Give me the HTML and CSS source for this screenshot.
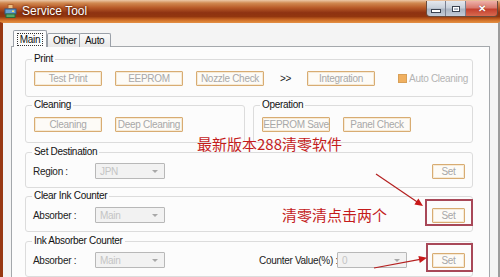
FILE: index.html
```html
<!DOCTYPE html>
<html lang="en">
<head>
    <meta charset="UTF-8">
    <title>Service Tool</title>
    <link rel="stylesheet" href="styles.css">
</head>
<body>
    <div class="window">
        <div class="titlebar">
            <svg class="app-icon" width="13" height="14" viewBox="0 0 13 14">
                <rect x="4" y="0.5" width="5" height="4" fill="#f0c080" stroke="#b06030"/>
                <rect x="1" y="5" width="11" height="5" fill="#6aa0d0" stroke="#2a5a8a"/>
                <rect x="2" y="10" width="9" height="3.5" fill="#58a868" stroke="#2a6a3a"/>
                <rect x="8" y="6.5" width="2" height="1.5" fill="#f8e070"/>
            </svg>
            <span class="title">Service Tool</span>
            <div class="caption-buttons">
                <span class="cap cap-min"><i></i></span>
                <span class="cap cap-max"><i></i></span>
                <span class="cap cap-close">✕</span>
            </div>
        </div>

        <div class="client">
            <div class="tabs">
                <div class="tab active"><span class="focus">Main</span></div>
                <div class="tab">Other</div>
                <div class="tab">Auto</div>
            </div>

            <div class="panel">
                <!-- Print -->
                <fieldset class="group">
                    <legend>Print</legend>
                    <div class="row">
                        <button class="btn">Test Print</button>
                        <button class="btn">EEPROM</button>
                        <button class="btn">Nozzle Check</button>
                        <span class="next">&gt;&gt;</span>
                        <button class="btn">Integration</button>
                        <label class="check"><span class="box"></span>Auto Cleaning</label>
                    </div>
                </fieldset>

                <div class="pair">
                    <fieldset class="group">
                        <legend>Cleaning</legend>
                        <div class="row">
                            <button class="btn">Cleaning</button>
                            <button class="btn">Deep Cleaning</button>
                        </div>
                    </fieldset>
                    <fieldset class="group">
                        <legend>Operation</legend>
                        <div class="row">
                            <button class="btn">EEPROM Save</button>
                            <button class="btn">Panel Check</button>
                        </div>
                    </fieldset>
                </div>

                <!-- Set Destination -->
                <fieldset class="group group-form">
                    <legend>Set Destination</legend>
                    <div class="row">
                        <span class="field-label">Region :</span>
                        <div class="select">JPN</div>
                        <button class="btn btn-set">Set</button>
                    </div>
                </fieldset>

                <!-- Clear Ink Counter -->
                <fieldset class="group group-form group-wide-gap">
                    <legend>Clear Ink Counter</legend>
                    <div class="row">
                        <span class="field-label">Absorber :</span>
                        <div class="select">Main</div>
                        <button class="btn btn-set">Set</button>
                    </div>
                </fieldset>

                <!-- Ink Absorber Counter -->
                <fieldset class="group group-form">
                    <legend>Ink Absorber Counter</legend>
                    <div class="row">
                        <span class="field-label">Absorber :</span>
                        <div class="select">Main</div>
                        <span class="counter-label">Counter Value(%) :</span>
                        <div class="select">0</div>
                        <button class="btn btn-set">Set</button>
                    </div>
                </fieldset>
            </div>
        </div>

        <!-- red annotations drawn over the screenshot -->
        <div class="note note-top">最新版本288清零软件</div>
        <div class="note note-mid">清零清点击两个</div>
        <div class="mark mark-1"></div>
        <div class="mark mark-2"></div>
        <svg class="arrows" width="500" height="277" viewBox="0 0 500 277">
            <line x1="376" y1="174" x2="418" y2="202.5" stroke="#b42020" stroke-width="1.2"/>
            <polygon points="423,206 414.4,204.4 418.4,198.6" fill="#c81818"/>
            <line x1="374" y1="268" x2="420" y2="259.3" stroke="#b42020" stroke-width="1.2"/>
            <polygon points="427,257.8 419.8,262.9 418.4,256.1" fill="#c81818"/>
        </svg>
    </div>
</body>
</html>
```

FILE: styles.css
```css
body {
    margin: 0;
    font-family: "Liberation Sans", Arial, sans-serif;
    font-size: 10px;
    letter-spacing: -0.3px;
    color: #222;
}
.window {
    position: relative;
    width: 500px;
    height: 277px;
    overflow: hidden;
    display: flex;
    flex-direction: column;
}
.titlebar {
    flex: none;
    height: 22px;
    display: flex;
    align-items: center;
    padding-left: 4px;
    background: linear-gradient(to bottom, #ecc8a8 0%, #d08850 14%, #b85a28 35%, #8e3212 58%, #92360f 75%, #cc6a26 90%, #e08838 100%);
}
.app-icon {
    flex: none;
}
.title {
    margin-left: 5px;
    font-size: 12px;
    letter-spacing: 0;
    color: #fff;
    text-shadow: 0 0 2px #5a1a00, 0 0 3px #5a1a00;
}
.caption-buttons {
    margin-left: auto;
    margin-right: 2px;
    align-self: flex-start;
    margin-top: 1px;
    display: flex;
    height: 15px;
    border: 1px solid #6a4a3a;
    border-top: none;
    border-radius: 0 0 4px 4px;
    overflow: hidden;
}
.cap {
    display: flex;
    align-items: center;
    justify-content: center;
    height: 15px;
    background: linear-gradient(to bottom, #e4e8ee 0%, #c8d0da 45%, #aab4c2 55%, #c4ccd8 100%);
    border-right: 1px solid #7a8090;
}
.cap-min {
    width: 18px;
}
.cap-min i {
    width: 8px;
    height: 2px;
    margin-top: 4px;
    background: #fff;
    border: 1px solid #3a4250;
}
.cap-max {
    width: 19px;
}
.cap-max i {
    width: 6px;
    height: 4px;
    border: 1px solid #3a4250;
    box-shadow: inset 0 0 0 1px #fff;
}
.cap-close {
    width: 31px;
    border-right: none;
    background: linear-gradient(to bottom, #eeb0a8 0%, #d87a6e 45%, #c4402e 55%, #d86a50 100%);
    color: #fff;
    font-size: 10px;
    font-weight: bold;
    text-shadow: 0 0 1px #6a1008;
}

.client {
    flex: 1;
    display: flex;
    flex-direction: column;
    background: #f4f4f4;
    border-left: 3px solid #983812;
    border-right: 2px solid #9c9c9c;
    border-top: 1px solid #e08a40;
    padding: 8px 8px 0 8px;
    min-height: 0;
}
.tabs {
    display: flex;
    align-items: flex-end;
    height: 16px;
    padding-left: 2px;
    margin-bottom: -1px;
    position: relative;
}
.tab {
    height: 13px;
    padding: 0 5px;
    display: flex;
    align-items: center;
    border: 1px solid #9aa0a8;
    border-bottom: none;
    border-radius: 2px 2px 0 0;
    background: linear-gradient(to bottom, #fafafa, #e8e8e8);
    color: #111;
    font-size: 10px;
}
.tab + .tab {
    margin-left: -1px;
}
.tab.active {
    height: 16px;
    width: 32px;
    padding: 0;
    justify-content: center;
    background: #fcfcfc;
    margin-right: 1px;
}
.tab:nth-child(2) {
    width: 21px;
}
.tab:nth-child(3) {
    width: 20px;
}
.focus {
    padding: 0 2px;
    outline: 1px dotted #333;
    outline-offset: 0;
    line-height: 11px;
}
.panel {
    flex: 1;
    border: 1px solid #a4a8ac;
    border-bottom: none;
    background: #fcfcfc;
    padding: 6px 16px 0 13px;
}

.group {
    margin: 0 0 2px 0;
    padding: 6px 8px 10px 8px;
    border: 1px solid #dcdcdc;
    border-radius: 3px;
    min-width: 0;
}
.group legend {
    padding: 0 2px;
    margin-left: -2px;
    line-height: 12px;
    font-size: 10px;
    color: #111;
}
.group-form {
    padding: 5px 7px 8px 8px;
    margin-bottom: 2px;
}
.group-wide-gap {
    margin-bottom: 3px;
}
.pair {
    display: flex;
    gap: 8px;
    margin-bottom: 3px;
}
.pair .group {
    flex: 1;
    margin: 0;
}
.row {
    display: flex;
    align-items: center;
    height: 15px;
    white-space: nowrap;
}
.group-form .row {
    height: 16px;
}

.btn {
    box-sizing: border-box;
    flex: none;
    width: 68px;
    height: 15px;
    margin: 0 13px 0 0;
    padding: 0;
    border: 1px solid #d8ac72;
    border-radius: 1px;
    background: #fdfbf7;
    box-shadow: inset 0 0 0 1px #f6ead6;
    font-family: inherit;
    font-size: 10px;
    letter-spacing: -0.3px;
    white-space: nowrap;
    color: #a8a8a8;
}
.btn-set {
    width: 33px;
    margin: 0 0 0 auto;
}
.next {
    margin: 0 16px 0 3px;
    font-size: 10px;
    color: #222;
}
.check {
    margin-left: 10px;
    display: flex;
    align-items: center;
    color: #b4b4b4;
}
.box {
    width: 9px;
    height: 9px;
    margin-right: 2px;
    background: #f0b060;
    border: 1px solid #d8a058;
    box-sizing: border-box;
}

.field-label {
    flex: none;
    width: 62px;
    margin-left: -1px;
    color: #222;
}
.select {
    box-sizing: border-box;
    flex: none;
    width: 70px;
    height: 16px;
    padding-left: 4px;
    display: flex;
    align-items: center;
    border: 1px solid #b8b8b8;
    border-radius: 1px;
    background: #f2f2f2;
    color: #c4c4c4;
    position: relative;
}
.select::after {
    content: "";
    position: absolute;
    right: 6px;
    top: 6px;
    border-left: 3px solid transparent;
    border-right: 3px solid transparent;
    border-top: 3px solid #a8a8a8;
}
.counter-label {
    flex: none;
    margin-left: 94px;
    width: 78px;
    color: #222;
}

.note {
    position: absolute;
    font-family: "Noto Sans CJK SC", sans-serif;
    font-size: 15px;
    line-height: 17px;
    letter-spacing: 0;
    color: #c41c1c;
}
.note-top {
    left: 197px;
    top: 135px;
}
.note-mid {
    left: 282px;
    top: 206px;
}
.mark {
    position: absolute;
    border: 2px solid #a84858;
    box-sizing: border-box;
}
.mark-1 {
    left: 425px;
    top: 199px;
    width: 48px;
    height: 27px;
}
.mark-2 {
    left: 426px;
    top: 243px;
    width: 47px;
    height: 29px;
}
.arrows {
    position: absolute;
    left: 0;
    top: 0;
    pointer-events: none;
}
```
